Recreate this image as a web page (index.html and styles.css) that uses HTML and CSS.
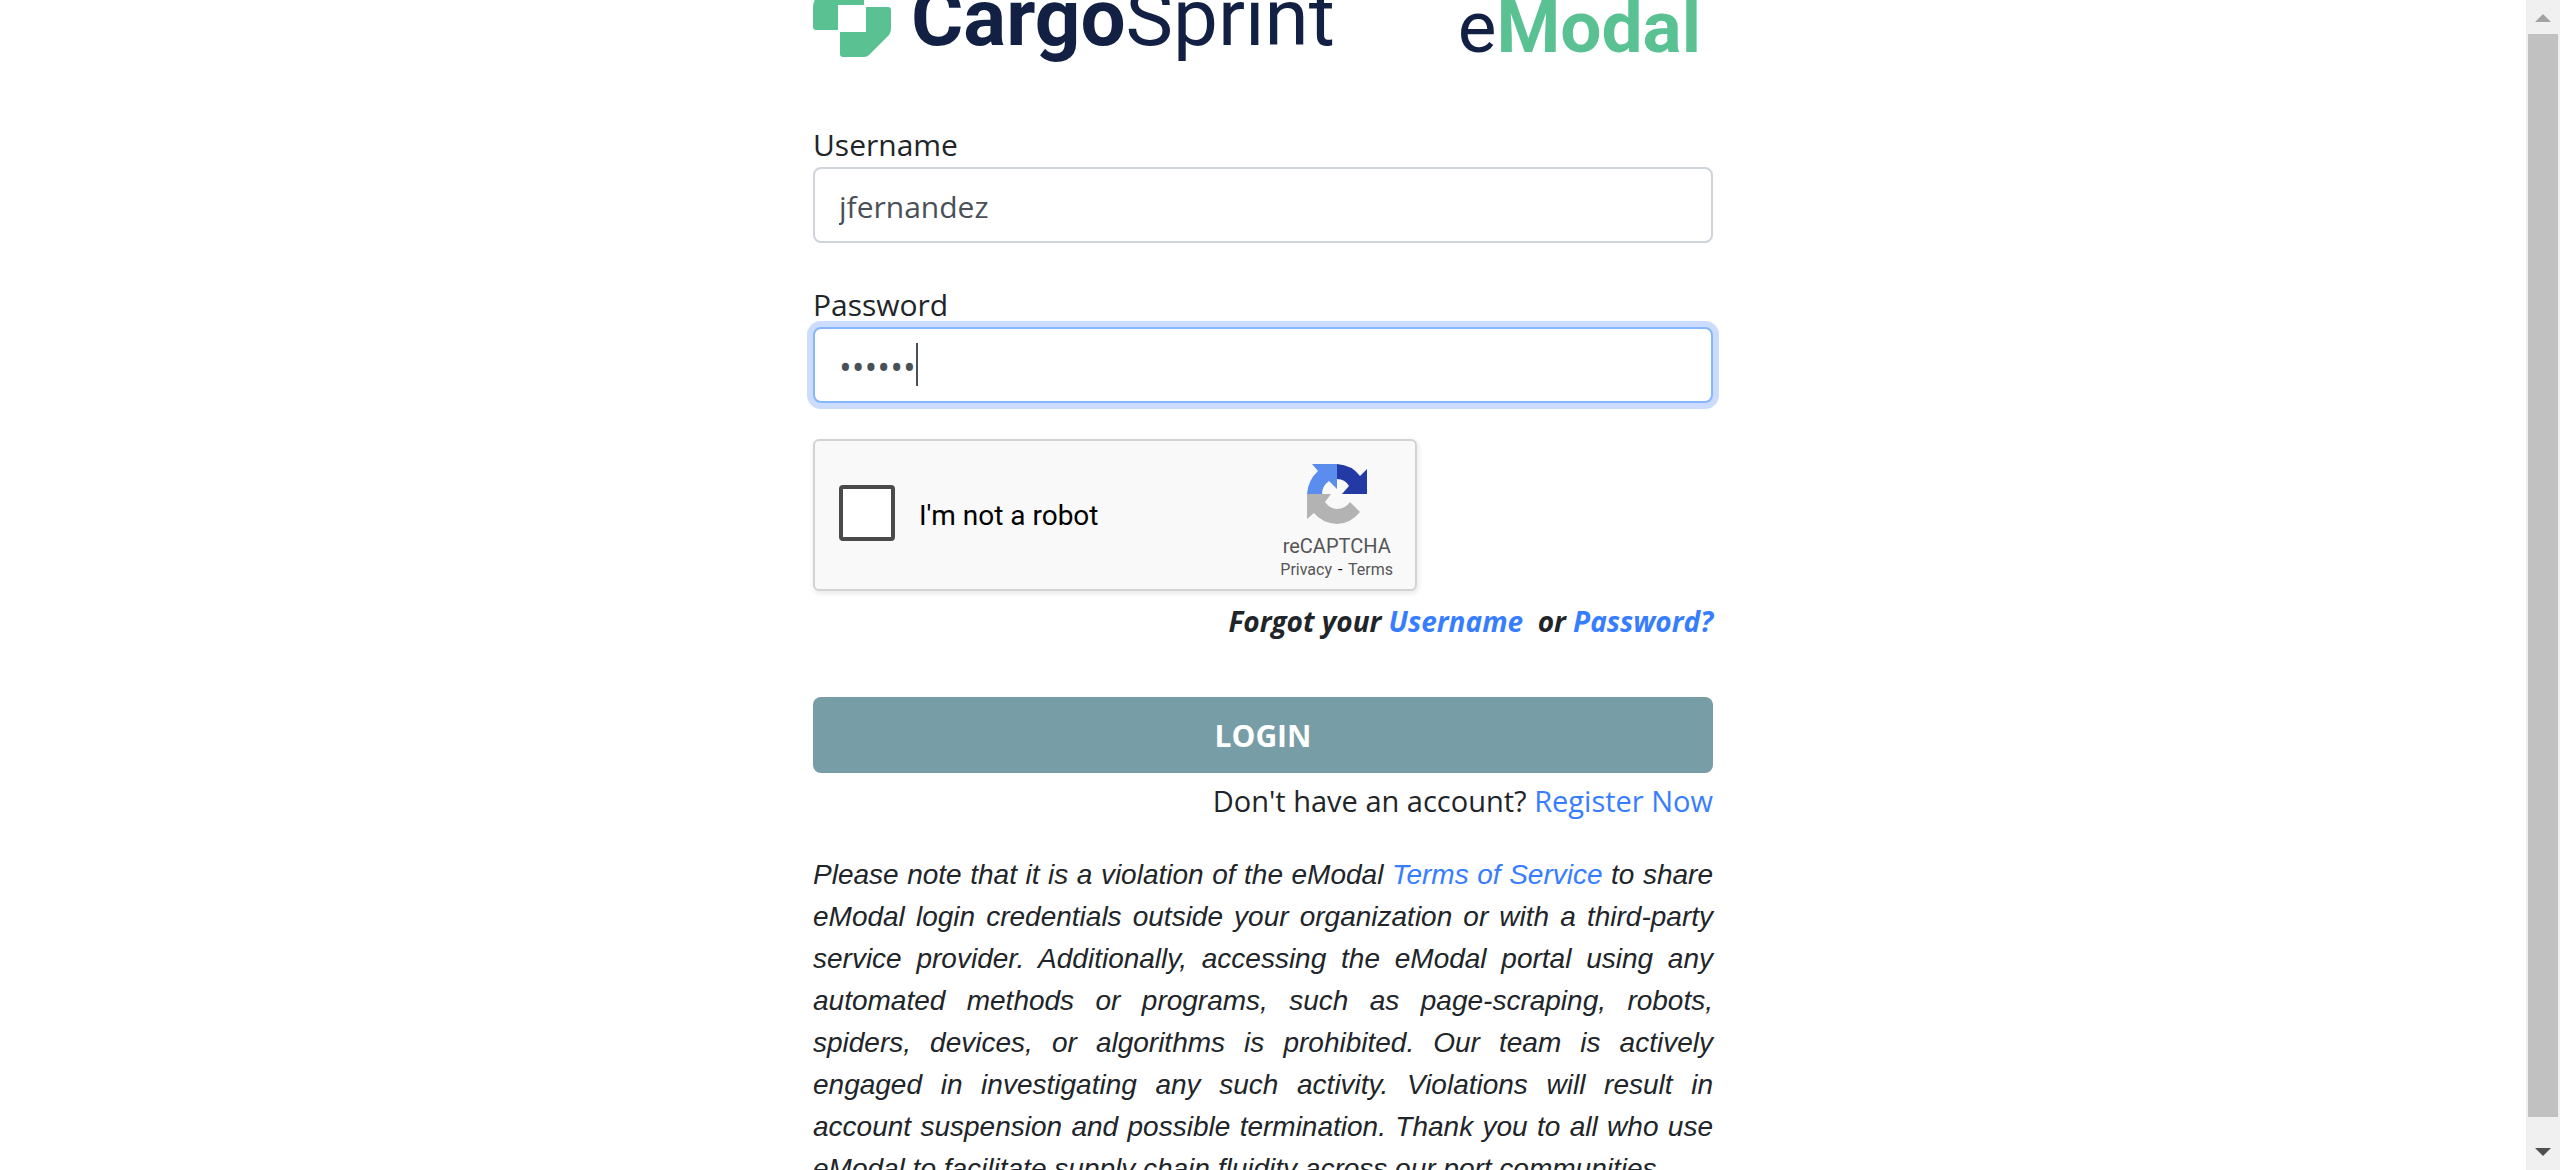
FILE: index.html
```
<!DOCTYPE html>
<html lang="en">
<head>
<meta charset="utf-8">
<title>eModal Login</title>
<link rel="stylesheet" href="styles.css">
</head>
<body>
<main class="page">
  <form class="login">
    <header class="brands">
      <div class="brand">
        <svg class="brand-mark" viewBox="0 0 78 80" aria-hidden="true">
          <g fill="#5ac193">
            <path d="M14 10 Q17 7 22 7 H51 V28 H25 V53 H3 Q0 53 0 50 V30 Q0 25 3 21Z"/>
            <path d="M53 30 H75 Q78 30 78 33 V52 Q78 55 76 58 L56 78 Q54 80 51 80 H30 Q27 80 27 77 V55 H53Z"/>
          </g>
        </svg>
        <span class="brand-name"><b>Cargo</b>Sprint</span>
      </div>
      <span class="product">e<b>Modal</b></span>
    </header>

    <div class="field">
      <label for="username">Username</label>
      <input class="control" id="username" type="text" value="jfernandez">
    </div>
    <div class="field">
      <label for="password">Password</label>
      <div class="control-wrap">
        <input class="control control-focus" id="password" type="password" value="secret">
        <span class="caret"></span>
      </div>
    </div>

    <div class="captcha">
      <input class="captcha-box" id="robot" type="checkbox">
      <label class="captcha-label" for="robot">I'm not a robot</label>
      <div class="captcha-brand">
        <svg class="captcha-logo" viewBox="0 0 60 60" aria-hidden="true">
          <path fill="#5b8def" d="M0 30 Q1 16 11 7 L5 0 H30 V25 L22 17 Q15 22 15 30Z"/>
          <path fill="#2339a3" d="M30 0 Q45 1 53 12 L60 5 V30 H35 L42 22 Q38 15 30 15Z"/>
          <path fill="#b3b3b3" d="M0 30 H24 L18 38 Q23 45 30 45 Q38 45 43 38 L53 48 Q43 60 30 60 Q15 59 7 49 L0 55Z"/>
        </svg>
        <span class="captcha-title">reCAPTCHA</span>
        <span class="captcha-links"><a href="#privacy">Privacy</a> <span class="dash">-</span> <a href="#terms">Terms</a></span>
      </div>
    </div>

    <p class="forgot">Forgot your <a href="#username">Username</a>&nbsp; or <a href="#password">Password?</a></p>
    <button class="submit" type="button">LOGIN</button>
    <p class="register">Don't have an account? <a href="#register">Register Now</a></p>
    <p class="notice">Please note that it is a violation of the eModal <a href="#tos">Terms of Service</a> to share eModal login credentials outside your organization or with a third-party service provider. Additionally, accessing the eModal portal using any automated methods or programs, such as page-scraping, robots, spiders, devices, or algorithms is prohibited. Our team is actively engaged in investigating any such activity. Violations will result in account suspension and possible termination. Thank you to all who use eModal to facilitate supply chain fluidity across our port communities.</p>
  </form>
</main>
<div class="scrollbar" aria-hidden="true">
  <svg class="arrow" viewBox="0 0 16 8"><path fill="#a3a3a3" d="M0 8 L8 0 L16 8Z"/></svg>
  <div class="thumb"></div>
  <svg class="arrow" viewBox="0 0 16 8"><path fill="#505050" d="M0 0 L8 8 L16 0Z"/></svg>
</div>
</body>
</html>
```

FILE: styles.css
```
* { box-sizing: border-box; }
body {
  margin: 0;
  height: 100vh;
  display: flex;
  overflow: hidden;
  background: #fff;
  color: #212529;
  font: 30px/48px "Open Sans", sans-serif;
}
a { color: #377dff; text-decoration: none; }
p { margin: 0; }

.page { flex: 1; overflow: hidden; padding: 0 24px; }
.login { max-width: 900px; margin: 0 auto; }

.brands {
  display: flex;
  justify-content: space-between;
  align-items: flex-end;
  height: 72px;
  padding-right: 12px;
  overflow: hidden;
  color: #122044;
  font-family: Roboto, sans-serif;
}
.brand { display: flex; align-items: flex-end; gap: 20px; }
.brand-mark { width: 78px; height: 80px; margin-bottom: 15px; }
.brand-name { font-size: 80px; line-height: 108px; }
.product { font-size: 73px; line-height: 90px; }
.product b { color: #5ac193; }

.field { display: flex; flex-direction: column; margin-top: 51px; }
.field label { line-height: 44px; }
.field + .field { margin-top: 40px; }
.control-wrap { position: relative; display: flex; }
.control {
  width: 100%;
  height: 76px;
  padding: 2px 24px 0;
  border: 2px solid #ced4da;
  border-radius: 8px;
  background: #fff;
  color: #495057;
  font: inherit;
  outline: none;
}
.control-focus {
  padding-top: 4px;
  border-color: #86b7fe;
  box-shadow: 0 0 0 6px #cbdcff;
  font-size: 34px;
}
.caret {
  position: absolute;
  left: 103px;
  top: 16px;
  width: 2px;
  height: 43px;
  background: #495057;
}

.captcha {
  display: flex;
  align-items: center;
  width: 604px;
  max-width: 100%;
  height: 152px;
  margin-top: 36px;
  padding: 0 22px 0 24px;
  border: 2px solid #d3d3d3;
  border-radius: 6px;
  background: #f9f9f9;
  box-shadow: 1px 2px 4px 1px rgba(0, 0, 0, .08);
  color: #000;
  font-family: Roboto, sans-serif;
}
.captcha-box {
  appearance: none;
  width: 56px;
  height: 56px;
  margin: 0 24px 4px 0;
  border: 4px solid #4a4a4a;
  border-radius: 4px;
  background: #fff;
}
.captcha-label { flex: 1; padding-top: 2px; font-size: 28px; }
.captcha-brand { display: flex; flex-direction: column; align-items: center; color: #555; }
.captcha-logo { width: 60px; height: 60px; margin: 16px 0 10px; }
.captcha-title { font-size: 20px; line-height: 24px; }
.captcha-links { font-size: 16px; line-height: 24px; }
.captcha-links a { color: #555; }
.dash { margin: 0 2px; color: #000; }

.forgot { margin-top: 6px; text-align: right; font-size: 28px; font-weight: 700; font-style: italic; }
.submit {
  display: block;
  width: 100%;
  height: 76px;
  margin-top: 52px;
  padding: 2px 0 0;
  border: 0;
  border-radius: 8px;
  background: #779da6;
  color: #fff;
  font: inherit;
  font-weight: 700;
}
.register { margin-top: 4px; text-align: right; font-size: 29px; }
.notice {
  margin-top: 29px;
  font: italic 28px/42px "Liberation Sans", Arial, sans-serif;
  text-align: justify;
}

.scrollbar {
  display: flex;
  flex-direction: column;
  align-items: center;
  justify-content: space-between;
  width: 34px;
  padding: 14px 2px;
  background: #f0f0f0;
}
.arrow { width: 16px; height: 8px; }
.thumb { flex: 1; width: 30px; margin: 12px 0 31px; background: #c1c1c1; }
```
